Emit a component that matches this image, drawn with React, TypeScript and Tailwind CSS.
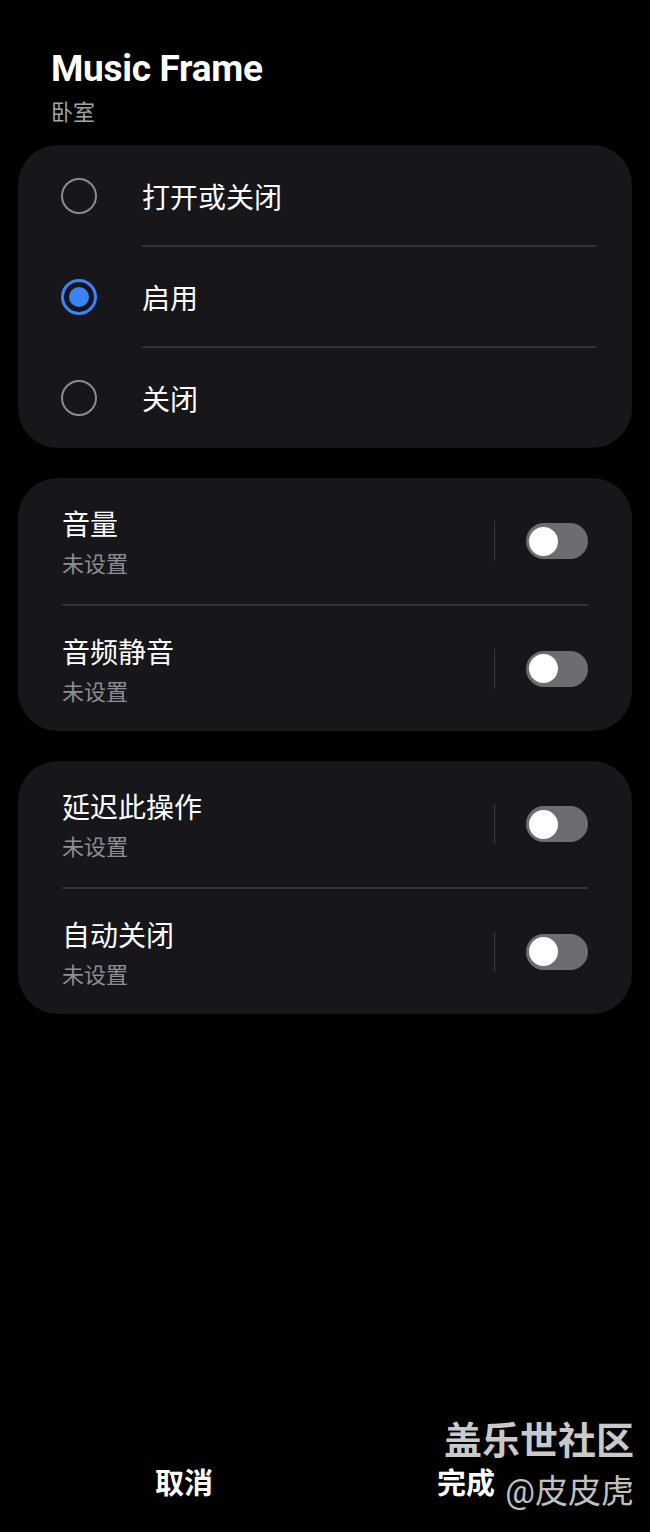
const font = { fontFamily: '"Roboto", "Noto Sans CJK SC", sans-serif' };

function Radio({ checked }: { checked: boolean }) {
  if (checked) {
    return (
      <div className="w-[36px] h-[36px] rounded-full border-[3px] border-[#3d82f6] flex items-center justify-center">
        <div className="w-[20px] h-[20px] rounded-full bg-[#3d82f6]" />
      </div>
    );
  }
  return <div className="w-[36px] h-[36px] rounded-full border-[2px] border-[#8c8c8e]" />;
}

function Toggle() {
  return (
    <div className="flex items-center">
      <div className="w-px h-[40px] bg-[#3a3a3e] mr-[31px]" />
      <div className="w-[62px] h-[36px] rounded-full bg-[#6c6c71] flex items-center px-[3px]">
        <div className="w-[29px] h-[29px] rounded-full bg-white" />
      </div>
    </div>
  );
}

function RadioCard() {
  const items = [
    { label: "打开或关闭", checked: false },
    { label: "启用", checked: true },
    { label: "关闭", checked: false },
  ];
  return (
    <div className="mx-[18px] rounded-[40px] bg-[#17171b] py-[1px]">
      {items.map((it, i) => (
        <div key={it.label}>
          {i > 0 && <div className="ml-[124px] mr-[36px] h-[2px] bg-[#333337]" />}
          <div className="flex items-center h-[99px]">
            <div className="w-[122px] flex justify-center">
              <Radio checked={it.checked} />
            </div>
            <span className="text-[28px] text-white leading-[40px] pt-[6px] ml-[2px]">{it.label}</span>
          </div>
        </div>
      ))}
    </div>
  );
}

function ToggleCard({ rows }: { rows: string[] }) {
  return (
    <div className="mx-[18px] rounded-[40px] bg-[#17171b] px-[44px]">
      {rows.map((r, i) => (
        <div key={r}>
          {i > 0 && <div className="h-[2px] bg-[#333337]" />}
          <div className={`flex items-center justify-between ${i === 0 ? "h-[126px]" : "h-[125px]"}`}>
            <div className="flex flex-col pt-[6px]">
              <span className="text-[28px] text-white leading-[36px]">{r}</span>
              <span className="text-[22px] text-[#8e8e92] leading-[30px] mt-[6px]">未设置</span>
            </div>
            <Toggle />
          </div>
        </div>
      ))}
    </div>
  );
}

export default function App() {
  return (
    <div className="relative w-[650px] h-[1532px] bg-black overflow-hidden" style={font}>
      <div className="pt-[44px] pl-[51px]">
        <div className="text-[37px] font-bold text-white leading-[50px] tracking-[-0.3px]">Music Frame</div>
        <div className="text-[22px] text-[#a3a3a6] leading-[30px] mt-[4px]">卧室</div>
      </div>
      <div className="mt-[17px] flex flex-col gap-[30px]">
        <RadioCard />
        <ToggleCard rows={["音量", "音频静音"]} />
        <ToggleCard rows={["延迟此操作", "自动关闭"]} />
      </div>
      <div className="absolute left-0 right-0 top-[1463px] flex">
        <div className="flex-1 text-center text-[29px] font-bold text-white pl-[43px]">取消</div>
        <div className="flex-1 text-center text-[29px] font-bold text-white pr-[43px]">完成</div>
      </div>
      <div className="absolute right-[16px] top-[1416px] flex flex-col items-end">
        <span className="text-[38px] font-bold text-[#c9c9c9] leading-[50px]">盖乐世社区</span>
        <span className="text-[33px] text-[#c0c0c0] leading-[44px] mt-[4px]">@皮皮虎</span>
      </div>
    </div>
  );
}
